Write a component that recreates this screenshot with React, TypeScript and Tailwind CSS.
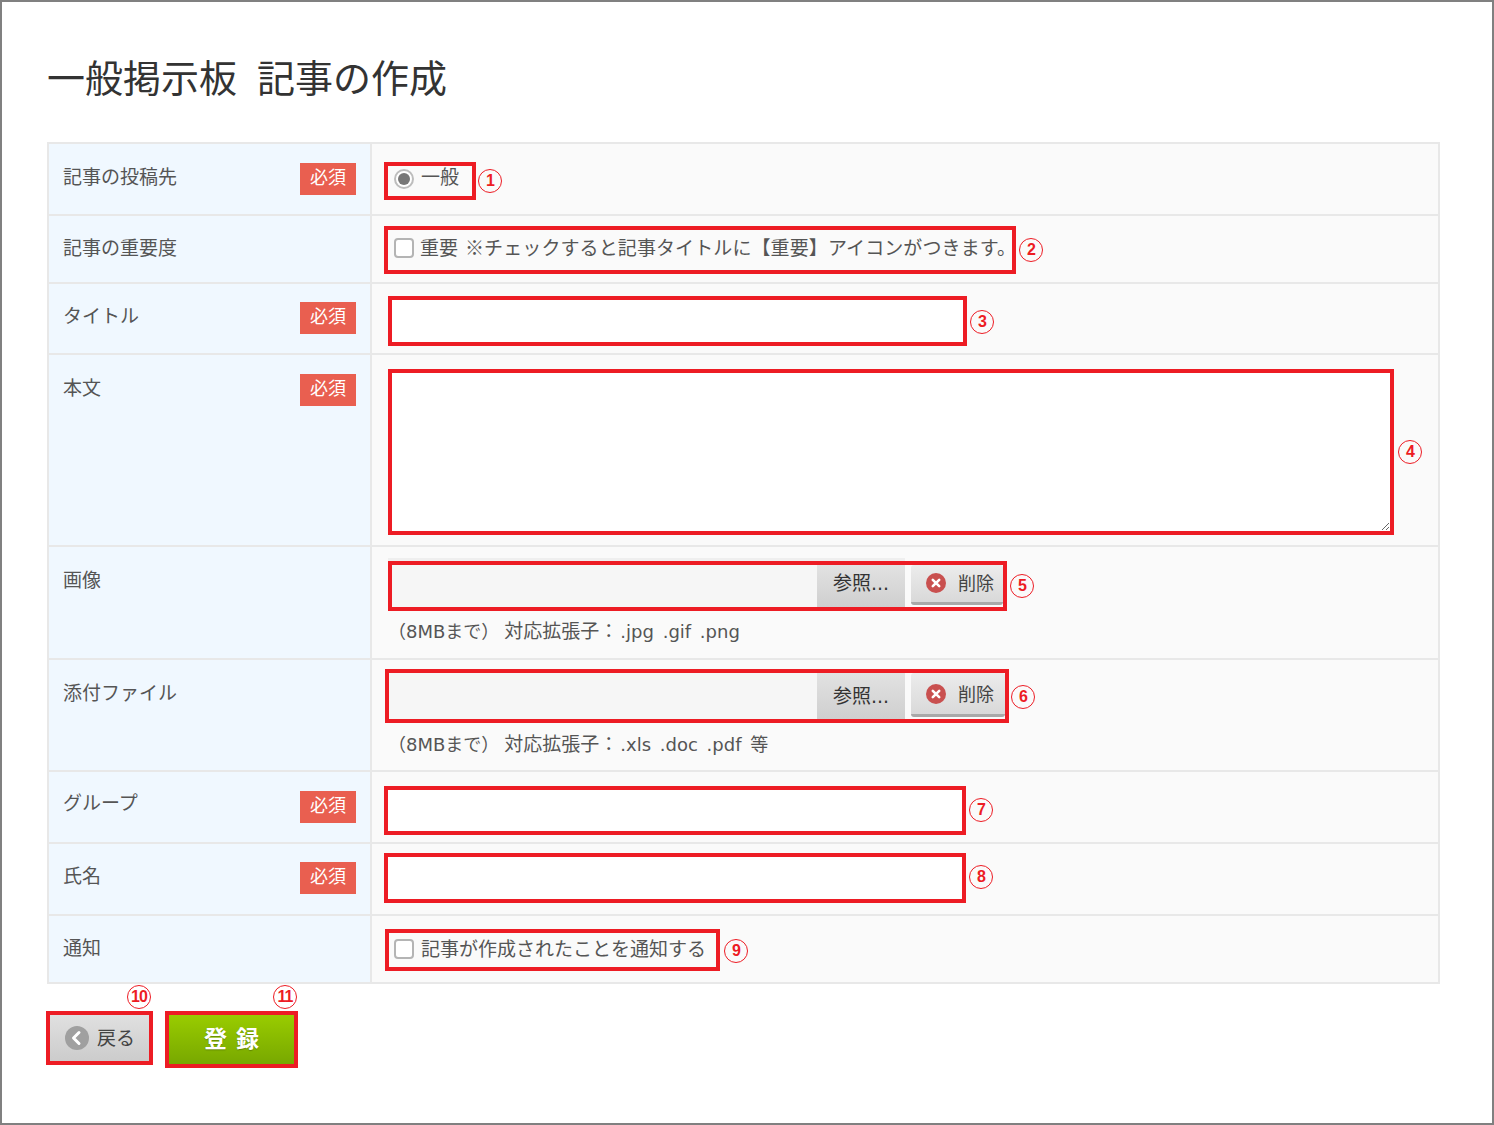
import React from "react";

const Num = ({ n, className = "" }: { n: number; className?: string }) => (
  <span className={`flex h-6 w-6 shrink-0 items-center justify-center rounded-full border-[1.5px] border-[#ed1c24] font-['Liberation_Sans',sans-serif] text-[16px] font-bold leading-none tracking-[-1px] text-[#ed1c24] ${className}`}>
    {n}
  </span>
);

const Badge = ({ className }: { className: string }) => (
  <span className={`flex h-8 w-14 shrink-0 items-center justify-center bg-[#e95f50] pb-[5px] text-[18px] leading-none text-white ${className}`}>必須</span>
);

type RowProps = {
  rowClass: string;
  label: string;
  labelClass: string;
  badgeClass?: string;
  cellClass: string;
  children: React.ReactNode;
};

const Row = ({ rowClass, label, labelClass, badgeClass, cellClass, children }: RowProps) => (
  <div className={`box-border flex border-[#e8e8e8] ${rowClass}`}>
    <div className="box-border flex w-[323px] shrink-0 items-start justify-between border-r-2 border-[#e8e8e8] bg-[#f0f8ff] pl-[14px] pr-[14px]">
      <span className={`text-[19px] leading-6 text-[#555] ${labelClass}`}>{label}</span>
      {badgeClass && <Badge className={badgeClass} />}
    </div>
    <div className={`min-w-0 flex-1 bg-[#fafafa] ${cellClass}`}>{children}</div>
  </div>
);

const Frame = ({ className, children }: { className: string; children?: React.ReactNode }) => (
  <div className={`relative box-border shrink-0 border-4 border-[#ed1c24] ${className}`}>{children}</div>
);

const RadioMark = () => (
  <span className="-mt-[4px] flex h-5 w-5 shrink-0 items-center justify-center rounded-full border-2 border-[#bdbdbd] bg-white">
    <span className="h-[12px] w-[12px] rounded-full bg-[#777]" />
  </span>
);

const CheckMark = ({ className }: { className: string }) => (
  <span className={`h-5 w-5 shrink-0 rounded-[4px] border-2 border-[#b4b4b4] bg-white ${className}`} />
);

const DeleteIcon = () => (
  <svg width="20" height="20" viewBox="0 0 20 20" className="shrink-0">
    <circle cx="10" cy="10" r="10" fill="#c9504f" />
    <path d="M6.8 6.8l6.4 6.4M13.2 6.8l-6.4 6.4" stroke="#fff" strokeWidth="2.6" strokeLinecap="round" />
  </svg>
);

const FileControl = ({ fieldClass, browseClass, deleteClass }: { fieldClass: string; browseClass: string; deleteClass: string }) => (
  <div className="flex h-full w-full items-stretch">
    <div className={`shrink-0 bg-[#f6f6f6] ${fieldClass}`} />
    <div className={`flex w-[88px] shrink-0 items-center justify-center bg-gradient-to-b from-[#e2e2e2] to-[#cfcfcf] font-['DejaVu_Sans','Noto_Sans_CJK_JP',sans-serif] text-[19px] leading-none text-[#333] ${browseClass}`}>
      参照...
    </div>
    <div className="w-[6px] shrink-0" />
    <div className={`flex min-w-0 flex-1 items-center gap-[12px] rounded-[3px] border-b-[3px] border-[#a9a9a9] bg-gradient-to-b from-[#ececec] to-[#d9d9d9] pl-[15px] text-[18px] leading-none text-[#444] ${deleteClass}`}>
      <DeleteIcon />
      <span>削除</span>
    </div>
  </div>
);

const Hint = ({ className, ext }: { className: string; ext: string }) => (
  <p className={`whitespace-nowrap font-['DejaVu_Sans','Noto_Sans_CJK_JP',sans-serif] text-[18px] leading-6 text-[#555] ${className}`}>
    （8MBまで）<span className="ml-[5px] text-[19px]">対応拡張子：</span>
    <span className="ml-[2px] [word-spacing:3px]">{ext}</span>
  </p>
);

export default function App() {
  return (
    <div className="box-border h-[1125px] w-[1494px] border-2 border-[#808080] bg-white pl-[45px] pt-[51px] font-['Open_Sans','Noto_Sans_CJK_JP',sans-serif]">
      <h1 className="mb-[41px] flex h-12 gap-5 text-[38px] font-normal leading-[48px] text-[#333]">
        <span>一般掲示板</span>
        <span>記事の作成</span>
      </h1>

      <div className="box-border w-[1393px] border-2 border-[#e8e8e8]">
        <Row rowClass="h-[70px]" label="記事の投稿先" labelClass="mt-[21px]" badgeClass="mt-[19px]" cellClass="flex items-start pl-[12px] pt-[18px]">
          <Frame className="flex h-[38px] w-[92px] items-center pl-[6px]">
            <RadioMark />
            <span className="ml-[7px] -mt-[8px] text-[19px] leading-6 text-[#555]">一般</span>
          </Frame>
          <Num n={1} className="ml-[2px] mt-[7px]" />
        </Row>

        <Row rowClass="h-[68px] border-t-2" label="記事の重要度" labelClass="mt-5" cellClass="flex items-start pl-[12px] pt-[10px]">
          <Frame className="flex h-[48px] w-[632px] items-center pl-[6px]">
            <CheckMark className="-mt-[4px]" />
            <span className="ml-[6px] -mt-[5px] whitespace-nowrap text-[19px] leading-6 text-[#555]">
              重要<span className="ml-[7px] tracking-[0.1px]">※チェックすると記事タイトルに【重要】アイコンがつきます。</span>
            </span>
          </Frame>
          <Num n={2} className="ml-[3px] mt-[12px]" />
        </Row>

        <Row rowClass="h-[71px] border-t-2" label="タイトル" labelClass="mt-5" badgeClass="mt-[18px]" cellClass="flex items-start pl-4 pt-[12px]">
          <Frame className="h-[50px] w-[579px]">
            <input aria-label="タイトル" className="block h-full w-full bg-white outline-none" />
          </Frame>
          <Num n={3} className="ml-[3px] mt-[14px]" />
        </Row>

        <Row rowClass="h-[192px] border-t-2" label="本文" labelClass="mt-[21px]" badgeClass="mt-[19px]" cellClass="flex items-start pl-4 pt-[14px]">
          <Frame className="h-[166px] w-[1006px]">
            <textarea aria-label="本文" className="block h-full w-full resize bg-white outline-none" />
          </Frame>
          <Num n={4} className="ml-[4px] mt-[71px]" />
        </Row>

        <Row rowClass="h-[113px] border-t-2" label="画像" labelClass="mt-[21px]" cellClass="pl-4 pt-[14px]">
          <div className="flex items-start">
            <Frame className="h-[50px] w-[619px]">
              <div className="absolute -left-1 -top-[7px] h-[3px] w-[517px] bg-[#efefef]" />
              <FileControl fieldClass="w-[425px]" browseClass="pb-[5px]" deleteClass="mb-[2px] pb-[2px]" />
            </Frame>
            <Num n={5} className="ml-[3px] mt-[13px]" />
          </div>
          <Hint className="mt-[8px]" ext=".jpg .gif .png" />
        </Row>

        <Row rowClass="h-[112px] border-t-2" label="添付ファイル" labelClass="mt-[21px]" cellClass="pl-[13px] pt-[9px]">
          <div className="flex items-start">
            <Frame className="h-[54px] w-[624px]">
              <FileControl fieldClass="w-[428px]" browseClass="" deleteClass="mb-[2px]" />
            </Frame>
            <Num n={6} className="ml-[2px] mt-[16px]" />
          </div>
          <Hint className="mt-[9px] pl-[3px]" ext=".xls .doc .pdf 等" />
        </Row>

        <Row rowClass="h-[72px] border-t-2" label="グループ" labelClass="mt-[19px]" badgeClass="mt-[19px]" cellClass="flex items-start pl-[12px] pt-[14px]">
          <Frame className="h-[49px] w-[582px]">
            <input aria-label="グループ" className="block h-full w-full bg-white outline-none" />
          </Frame>
          <Num n={7} className="ml-[3px] mt-[12px]" />
        </Row>

        <Row rowClass="h-[72px] border-t-2" label="氏名" labelClass="mt-[20px]" badgeClass="mt-[18px]" cellClass="flex items-start pl-[12px] pt-[9px]">
          <Frame className="h-[50px] w-[582px]">
            <input aria-label="氏名" className="block h-full w-full bg-white outline-none" />
          </Frame>
          <Num n={8} className="ml-[3px] mt-[12px]" />
        </Row>

        <Row rowClass="h-[68px] border-t-2" label="通知" labelClass="mt-[20px]" cellClass="flex items-start pl-[13px] pt-[13px]">
          <Frame className="flex h-[42px] w-[335px] items-center pl-[5px]">
            <CheckMark className="-mt-[2px]" />
            <span className="ml-[7px] -mt-[3px] whitespace-nowrap text-[19px] leading-6 text-[#555]">記事が作成されたことを通知する</span>
          </Frame>
          <Num n={9} className="ml-[4px] mt-[10px]" />
        </Row>
      </div>

      <div className="-ml-px mt-[27px] flex items-start gap-3">
        <div className="relative box-border flex h-[54px] w-[107px] items-center border-4 border-[#ed1c24] bg-gradient-to-b from-[#e0e0e0] to-[#cccccc] pl-[15px]">
          <Num n={10} className="absolute -top-[30px] left-[77px]" />
          <svg width="24" height="24" viewBox="0 0 24 24" className="shrink-0">
            <circle cx="12" cy="12" r="12" fill="#a0a0a0" />
            <path d="M14 6.5L8.5 12l5.5 5.5" fill="none" stroke="#fff" strokeWidth="3" strokeLinecap="round" strokeLinejoin="round" />
          </svg>
          <span className="ml-[8px] text-[19px] leading-none text-[#444]">戻る</span>
        </div>
        <div className="relative box-border flex h-[57px] w-[133px] items-center justify-center border-4 border-[#ed1c24] bg-gradient-to-b from-[#99cc00] to-[#78a800] pb-[3px]">
          <Num n={11} className="absolute -top-[30px] left-[104px]" />
          <span className="whitespace-nowrap text-[23px] font-bold leading-none text-white [text-shadow:0_1px_1px_rgba(0,0,0,0.25)]">登<span className="ml-[9px]">録</span></span>
        </div>
      </div>
    </div>
  );
}
